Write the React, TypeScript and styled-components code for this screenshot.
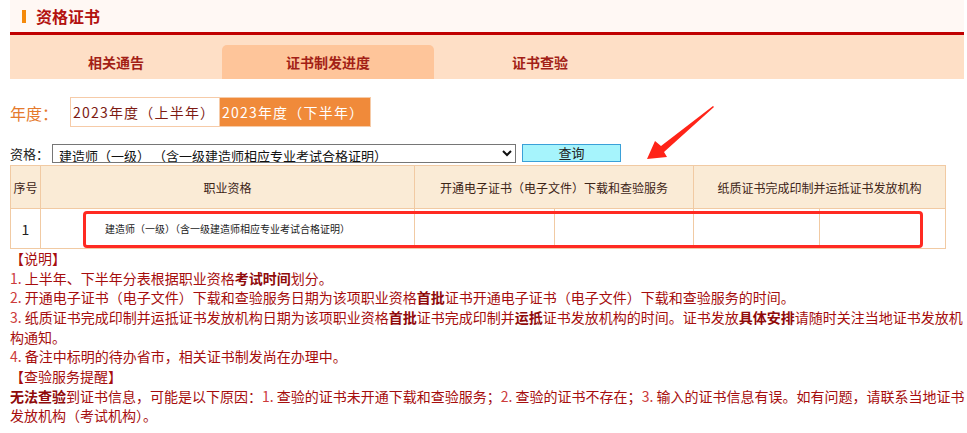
import React from "react";
import styled, { createGlobalStyle } from "styled-components";

const Global = createGlobalStyle`
  html, body { margin: 0; padding: 0; background: #fff; }
  body { font-family: "Noto Sans CJK SC", "Noto Sans", sans-serif; }
  * { box-sizing: border-box; }
`;

const Page = styled.div`
  position: relative;
  margin-left: 10px;
  width: 954px;
`;

const Header = styled.div`
  height: 35px;
  background: #fff8f4;
  border-bottom: 3px solid #c00000;
  display: flex;
  align-items: center;
  padding-left: 12px;
  gap: 10px;
`;

const Marker = styled.span`
  width: 4px;
  height: 13px;
  background: #f58a0b;
`;

const Title = styled.h1`
  margin: 0;
  font-size: 16px;
  line-height: 20px;
  font-weight: bold;
  color: #b3120f;
`;

const TabBar = styled.div`
  height: 44px;
  background: #fedfc6;
  display: flex;
  align-items: flex-end;
`;

const Tab = styled.div<{ $active?: boolean }>`
  width: 212px;
  height: 34px;
  display: flex;
  align-items: center;
  justify-content: center;
  font-size: 14px;
  font-weight: bold;
  color: #a31f16;
  background: ${(p) => (p.$active ? "#fec59a" : "transparent")};
  border-radius: 5px 5px 0 0;
`;

const YearRow = styled.div`
  margin-top: 18px;
  display: flex;
  align-items: center;
  height: 30px;
`;

const YearLabel = styled.span`
  width: 60px;
  font-size: 16px;
  color: #e57a2c;
  line-height: 30px;
  padding-top: 1px;
`;

const YearButton = styled.button<{ $active?: boolean }>`
  height: 30px;
  width: ${(p) => (p.$active ? 151 : 150)}px;
  padding: 0 0 0 2px;
  margin: 0;
  text-align: left;
  font-family: inherit;
  font-size: 14px;
  letter-spacing: 1.2px;
  border: 1px solid #f6cba8;
  border-left-width: ${(p) => (p.$active ? 0 : 1)}px;
  background: ${(p) => (p.$active ? "#f08a3a" : "#fff")};
  color: ${(p) => (p.$active ? "#fff" : "#7d1a12")};
`;

const QualRow = styled.div`
  margin-top: 16px;
  display: flex;
  align-items: center;
  height: 20px;
`;

const QualLabel = styled.span`
  width: 42px;
  font-size: 13px;
  color: #222;
`;

const Select = styled.select`
  width: 464px;
  height: 19px;
  font-family: inherit;
  font-size: 13px;
  color: #111;
  border: 1px solid #767676;
  border-radius: 0;
  padding: 0 2px;
  background: #fff;
  line-height: 17px;
`;

const QueryButton = styled.button`
  margin-left: 6px;
  width: 99px;
  height: 18px;
  padding: 0;
  font-family: inherit;
  font-size: 13px;
  line-height: 16px;
  color: #222;
  background: #a6f4fc;
  border: 1px solid #3aa0d8;
`;

const Table = styled.table`
  margin-top: 2px;
  width: 935px;
  border-collapse: collapse;
  table-layout: fixed;
  font-size: 12px;
  color: #3d2417;
`;

const Th = styled.th`
  height: 43px;
  background: #faebd6;
  border: 1px solid #f1caa3;
  font-weight: normal;
  text-align: center;
`;

const Td = styled.td<{ $small?: boolean }>`
  height: 40px;
  border: 1px solid #f1caa3;
  text-align: center;
  font-size: ${(p) => (p.$small ? "10px" : "14px")};
  color: #222;
`;

const HighlightBox = styled.div`
  position: absolute;
  left: 73px;
  top: 211px;
  width: 840px;
  height: 37px;
  border: 3px solid #ff2a22;
  border-radius: 4px;
  pointer-events: none;
`;

const Arrow = styled.svg`
  position: absolute;
  left: 620px;
  top: 100px;
`;

const Notes = styled.div`
  width: 956px;
  font-size: 14px;
  line-height: 19.65px;
  color: #a60d0d;
`;

const NoteTitle = styled.div`
  padding-left: 0;
`;

const Line = styled.div``;

const Num = styled.span`
  color: #cc3b3b;
`;

const B = styled.b`
  color: #8f0a0a;
`;

export default function App() {
  return (
    <>
      <Global />
      <Page>
        <Header>
          <Marker />
          <Title>资格证书</Title>
        </Header>
        <TabBar>
          <Tab>相关通告</Tab>
          <Tab $active>证书制发进度</Tab>
          <Tab>证书查验</Tab>
        </TabBar>
        <YearRow>
          <YearLabel>年度：</YearLabel>
          <YearButton>2023年度（上半年）</YearButton>
          <YearButton $active>2023年度（下半年）</YearButton>
        </YearRow>
        <QualRow>
          <QualLabel>资格：</QualLabel>
          <Select defaultValue="a">
            <option value="a">建造师（一级） （含一级建造师相应专业考试合格证明）</option>
          </Select>
          <QueryButton>查询</QueryButton>
        </QualRow>
        <Table>
          <colgroup>
            <col style={{ width: 30 }} />
            <col style={{ width: 374 }} />
            <col style={{ width: 140 }} />
            <col style={{ width: 139 }} />
            <col style={{ width: 126 }} />
            <col style={{ width: 126 }} />
          </colgroup>
          <thead>
            <tr>
              <Th>序号</Th>
              <Th>职业资格</Th>
              <Th colSpan={2}>开通电子证书（电子文件）下载和查验服务</Th>
              <Th colSpan={2}>纸质证书完成印制并运抵证书发放机构</Th>
            </tr>
          </thead>
          <tbody>
            <tr>
              <Td>1</Td>
              <Td $small>建造师（一级）（含一级建造师相应专业考试合格证明）</Td>
              <Td />
              <Td />
              <Td />
              <Td />
            </tr>
          </tbody>
        </Table>
        <Notes>
          <NoteTitle>【说明】</NoteTitle>
          <Line>
            <Num>1.</Num> 上半年、下半年分表根据职业资格<B>考试时间</B>划分。
          </Line>
          <Line>
            <Num>2.</Num> 开通电子证书（电子文件）下载和查验服务日期为该项职业资格<B>首批</B>证书开通电子证书（电子文件）下载和查验服务的时间。
          </Line>
          <Line>
            <Num>3.</Num> 纸质证书完成印制并运抵证书发放机构日期为该项职业资格<B>首批</B>证书完成印制并<B>运抵</B>证书发放机构的时间。证书发放<B>具体安排</B>请随时关注当地证书发放机构通知。
          </Line>
          <Line>
            <Num>4.</Num> 备注中标明的待办省市，相关证书制发尚在办理中。
          </Line>
          <NoteTitle>【查验服务提醒】</NoteTitle>
          <Line>
            <B>无法查验</B>到证书信息，可能是以下原因：<Num>1.</Num> 查验的证书未开通下载和查验服务；<Num>2.</Num> 查验的证书不存在；<Num>3.</Num> 输入的证书信息有误。如有问题，请联系当地证书发放机构（考试机构）。
          </Line>
        </Notes>
        <HighlightBox />
        <Arrow width="90" height="70" viewBox="0 0 90 70">
          <polygon points="83,6 31,46 25,41 17,59 37,57 34,52 84,7" fill="#ff2418" />
        </Arrow>
      </Page>
    </>
  );
}
